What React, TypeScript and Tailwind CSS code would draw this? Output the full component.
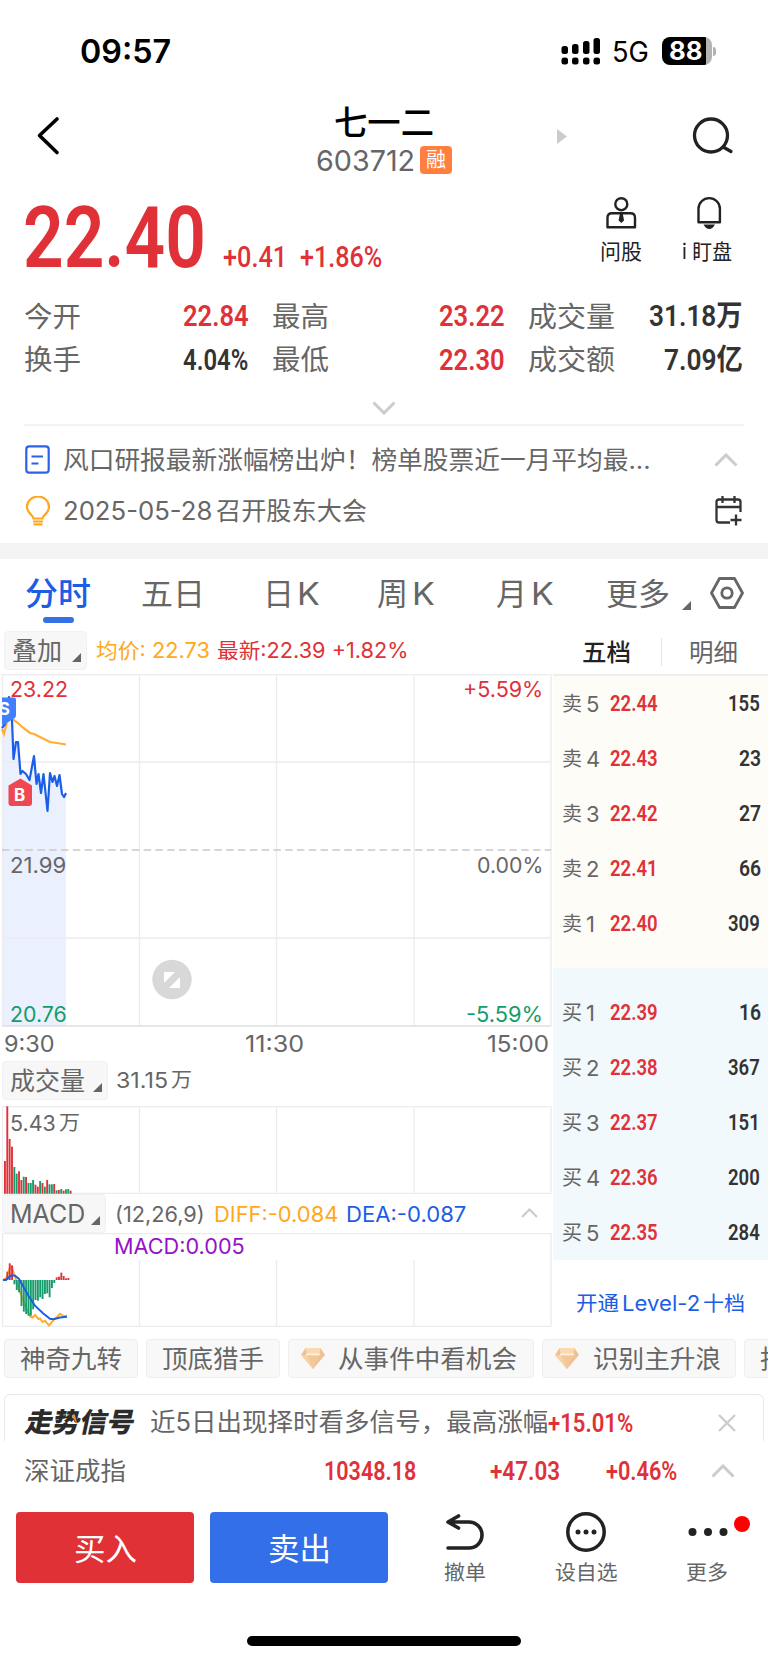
import { useLayoutEffect, useRef, type ReactNode } from "react";

const din = "font-['Roboto','Noto_Sans_CJK_SC',sans-serif]";

/* Single line of text, condensed or widened to fill the width of its box. */
function Fit({ className = "", children }: { className?: string; children: ReactNode }) {
  const box = useRef<HTMLSpanElement>(null);
  const text = useRef<HTMLSpanElement>(null);
  useLayoutEffect(() => {
    if (!box.current || !text.current) return;
    const ratio = box.current.clientWidth / text.current.offsetWidth;
    text.current.style.transform = `scaleX(${ratio})`;
  }, []);
  return (
    <span ref={box} className={`block shrink-0 leading-none ${className}`}>
      <span ref={text} className="inline-block origin-left whitespace-nowrap">
        {children}
      </span>
    </span>
  );
}

function Chevron({ up = false, className = "" }: { up?: boolean; className?: string }) {
  return (
    <svg className={`shrink-0 ${className}`} viewBox="0 0 24 14" fill="none" stroke="#cccccc" strokeWidth="3">
      <path d={up ? "M1.5 12.5 12 2l10.5 10.5" : "M1.5 1.5 12 12 22.5 1.5"} />
    </svg>
  );
}

function Corner({ className = "" }: { className?: string }) {
  return (
    <svg className={`size-[9px] shrink-0 ${className}`} viewBox="0 0 9 9">
      <path d="M9 0v9H0z" fill="#666" />
    </svg>
  );
}

function StatusBar() {
  return (
    <div className="flex h-[102px] items-center text-black">
      <Fit className="ml-[80px] w-[91px] pt-[1px] text-[33px] font-semibold">09:57</Fit>
      <svg className="ml-[390px] h-[28px] w-[40px] shrink-0" viewBox="561 37 40 28">
        <rect x="561.5" y="46" width="6.5" height="8" rx="2.5" />
        <rect x="572" y="44" width="6.5" height="10" rx="2.5" />
        <rect x="583" y="41" width="6.5" height="13" rx="2.5" />
        <rect x="593.500" y="38" width="6.5" height="16" rx="2.5" />
        <rect x="561.5" y="57.500" width="6.5" height="7" rx="2.5" />
        <rect x="572" y="57.500" width="6.5" height="7" rx="2.5" />
        <rect x="583" y="57.500" width="6.5" height="7" rx="2.5" />
        <rect x="593.500" y="57.500" width="6.5" height="7" rx="2.5" />
      </svg>
      <Fit className="ml-[11px] w-[37px] pt-[2px] text-[28px]">5G</Fit>
      <div className="ml-[13px] flex h-[28px] w-[50px] shrink-0 items-center justify-center overflow-hidden rounded-[8px] bg-[linear-gradient(90deg,#000_88%,#b3b3b3_88%)] pr-[2px] text-[25px] leading-none font-bold text-white">
        <Fit className="w-[34px]">88</Fit>
      </div>
      <div className="ml-[1px] h-[9px] w-[3px] shrink-0 rounded-r-full bg-[#b3b3b3]" />
    </div>
  );
}

function Header() {
  return (
    <div className="flex h-[88px] items-start">
      <svg className="mt-[14px] ml-[36px] h-[40px] w-[24px] shrink-0" viewBox="36 116 24 40" fill="none" stroke="#000" strokeWidth="3.6" strokeLinecap="round" strokeLinejoin="round">
        <path d="M57 119 39.500 135.500 57 152.500" />
      </svg>
      <div className="ml-[256px] w-[137px] shrink-0">
        <Fit className="ml-[18px] h-[44px] w-[100px] pt-[4px] text-[34px] font-medium text-black">七一二</Fit>
        <div className="flex items-start">
          <Fit className="w-[99px] text-[29px] text-[#666]">603712</Fit>
          <div className="ml-[5px] flex h-[28px] w-[32px] shrink-0 items-center justify-center rounded-[4px] bg-[#ff7f40] text-[20px] leading-none text-white">
            融
          </div>
        </div>
      </div>
      <svg className="mt-[27px] ml-[104px] h-[15px] w-[10px] shrink-0" viewBox="0 0 10 15">
        <path d="M0 0 10 7.500 0 15z" fill="#ccc" />
      </svg>
      <svg className="mt-[13px] ml-[125px] h-[40px] w-[42px] shrink-0" viewBox="692 115 42 40" fill="none" stroke="#222" strokeWidth="3.300" strokeLinecap="round">
        <circle cx="711" cy="135.500" r="16.500" />
        <path d="M724 147.500 731 151.500" />
      </svg>
    </div>
  );
}

function Quote() {
  return (
    <div className="flex h-[96px] items-start text-[#e03138]">
      <Fit className={`${din} mt-[5px] ml-[23px] h-[86px] w-[183px] text-[86px] font-semibold`}>22.40</Fit>
      <Fit className={`${din} mt-[52px] ml-[17px] w-[64px] text-[30px] font-medium`}>+0.41</Fit>
      <Fit className={`${din} mt-[52px] ml-[13px] w-[82px] text-[30px] font-medium`}>+1.86%</Fit>
      <div className="mt-[6px] ml-[217px] flex w-[44px] shrink-0 flex-col items-center text-[#222]">
        <svg className="h-[33px] w-[34px]" viewBox="605 196 34 33" fill="none" stroke="#222" strokeWidth="2.400">
          <circle cx="622.300" cy="204.200" r="6" />
          <path d="M608.500 227.300v-9.500q0-4.500 4.500-4.500h18.500q4.500 0 4.500 4.500v9.500z" strokeLinejoin="round" />
          <path d="M620.800 214h3l1.200 6.500-2.700 2.500-2.700-2.500z" fill="#222" stroke="none" />
        </svg>
        <Fit className="mt-[12px] w-[42px] text-[21px]">问股</Fit>
      </div>
      <div className="mt-[6px] ml-[37px] flex w-[54px] shrink-0 flex-col items-center text-[#222]">
        <svg className="ml-[3px] h-[33px] w-[30px]" viewBox="695 196 30 33" fill="none" stroke="#222" strokeWidth="2.400">
          <path d="M699.500 222.300v-13.500a10.700 10.700 0 0 1 21.400 0v13.500z" strokeLinejoin="round" />
          <path d="M704.500 224.500h11.500q-2.500 4.500-5.700 4.500t-5.800-4.500z" fill="#222" stroke="none" />
        </svg>
        <Fit className="mt-[12px] w-[50px] text-[21px]">i 盯盘</Fit>
      </div>
    </div>
  );
}

function Stats() {
  const label = "text-[28px] text-[#666]";
  const value = `${din} text-[29px] font-semibold`;
  return (
    <div className="flex flex-col pt-[9px]">
      <div className="flex h-[43px] items-center">
        <Fit className={`ml-[24px] w-[57px] ${label}`}>今开</Fit>
        <Fit className={`ml-[102px] w-[66px] text-[#e03138] ${value}`}>22.84</Fit>
        <Fit className={`ml-[23px] w-[57px] ${label}`}>最高</Fit>
        <Fit className={`ml-[110px] w-[66px] text-[#e03138] ${value}`}>23.22</Fit>
        <Fit className={`ml-[23px] w-[87px] ${label}`}>成交量</Fit>
        <Fit className={`ml-[34px] w-[94px] text-[#333] ${value}`}>31.18万</Fit>
      </div>
      <div className="flex h-[43px] items-center pt-[1px]">
        <Fit className={`ml-[24px] w-[57px] ${label}`}>换手</Fit>
        <Fit className={`ml-[102px] w-[65px] text-[#333] ${value}`}>4.04%</Fit>
        <Fit className={`ml-[24px] w-[57px] ${label}`}>最低</Fit>
        <Fit className={`ml-[110px] w-[66px] text-[#e03138] ${value}`}>22.30</Fit>
        <Fit className={`ml-[23px] w-[87px] ${label}`}>成交额</Fit>
        <Fit className={`ml-[49px] w-[79px] text-[#333] ${value}`}>7.09亿</Fit>
      </div>
      <div className="mx-[24px] flex h-[45px] justify-center border-b-2 border-[#f3f3f3] pt-[20px]">
        <Chevron className="h-[14px] w-[24px]" />
      </div>
    </div>
  );
}

function News() {
  return (
    <div className="h-[133px] border-b-[16px] border-[#f4f4f4] pt-[8px] text-[25px] text-[#666]">
      <div className="flex h-[51px] items-center">
        <svg className="ml-[25px] h-[29px] w-[25px] shrink-0" viewBox="0 0 25 29" fill="none" stroke="#2a63ea" strokeWidth="2.200">
          <rect x="1.300" y="1.300" width="22.400" height="26.400" rx="3" />
          <path d="M6.500 11.500h11.500M6.500 18.500h7" />
        </svg>
        <Fit className="ml-[13px] w-[588px] pt-[1px]">风口研报最新涨幅榜出炉！榜单股票近一月平均最...</Fit>
        <Chevron up className="ml-[63px] h-[14px] w-[24px]" />
      </div>
      <div className="flex h-[51px] items-center">
        <svg className="ml-[25px] h-[30px] w-[26px] shrink-0" viewBox="0 0 26 30" fill="none" stroke="#ffa81d" strokeWidth="2.200">
          <path d="M8.500 22.500c0-3.500-6.500-5-6.500-11.500a11 10.500 0 0 1 22 0c0 6.500-6.500 8-6.500 11.500zM8 25.500h10M8.500 28.300h9" />
        </svg>
        <Fit className="ml-[12px] w-[149px] pt-[1px]">2025-05-28</Fit>
        <Fit className="ml-[4px] w-[151px] pt-[1px]">召开股东大会</Fit>
        <svg className="ml-[347px] h-[30px] w-[30px] shrink-0" viewBox="0 0 30 30" fill="none" stroke="#333" strokeWidth="2.300">
          <path d="M16 26.500H5q-2.500 0-2.500-2.500V6Q2.500 3.500 5 3.500h19q2.500 0 2.500 2.500v10M2.500 11h24M8.500 0v7M20.500 0v7M22 18.500v11M16.500 24h11" />
        </svg>
      </div>
    </div>
  );
}

function Tabs() {
  const tab = "text-[31px] text-[#666]";
  return (
    <div className="flex h-[71px] items-start">
      <div className="mt-[19px] ml-[25px] w-[66px] shrink-0">
        <Fit className="w-[66px] text-[32px] font-medium text-[#1d5de6]">分时</Fit>
        <div className="mt-[7px] ml-[18px] h-[6px] w-[31px] rounded-full bg-[#3470e8]" />
      </div>
      <Fit className={`mt-[19px] ml-[50px] w-[64px] ${tab}`}>五日</Fit>
      <div className="mt-[19px] ml-[58px] flex w-[58px] shrink-0 gap-[3px]">
        <Fit className={`w-[31px] ${tab}`}>日</Fit>
        <Fit className={`w-[23px] ${tab}`}>K</Fit>
      </div>
      <div className="mt-[19px] ml-[56px] flex w-[60px] shrink-0 gap-[4px]">
        <Fit className={`w-[31px] ${tab}`}>周</Fit>
        <Fit className={`w-[23px] ${tab}`}>K</Fit>
      </div>
      <div className="mt-[19px] ml-[59px] flex w-[60px] shrink-0 gap-[4px]">
        <Fit className={`w-[31px] ${tab}`}>月</Fit>
        <Fit className={`w-[23px] ${tab}`}>K</Fit>
      </div>
      <Fit className={`mt-[19px] ml-[50px] w-[64px] ${tab}`}>更多</Fit>
      <Corner className="mt-[42px] ml-[12px]" />
      <svg className="mt-[18px] ml-[19px] h-[32px] w-[34px] shrink-0" viewBox="0 0 34 32" fill="none" stroke="#666" strokeWidth="2.800" strokeLinejoin="round">
        <path d="M9.500 1.500h15l8 14.500-8 14.500h-15l-8-14.500z" />
        <circle cx="17" cy="16" r="5.200" />
      </svg>
    </div>
  );
}

const pricePath =
  "M2 728 5 724 7 712 9 697 11 708 12 720 13.500 759 16 742 18 742 20.500 774 22.500 771 26 774 29.500 780 34 756 36.500 784 38.500 774 41 793 43.500 774 47.500 811 50 773 52.500 782 54.500 776 57 786 59.500 775 62 794 64 797 66 793";

function PriceChart() {
  return (
    <div className="relative h-[353px] text-[21px]">
      <svg className="block h-[353px] w-[552px]" viewBox="0 674 552 353" fill="none">
        <path d={`${pricePath}V1026H2z`} fill="#eaf0fe" />
        <g stroke="#ececef" strokeWidth="1.300">
          <path d="M2 674.500H551M2 762H551M2 938H551M2.500 674V1026M139.500 674V1026M276.500 674V1026M414 674V1026M551 674V1026" />
          <path d="M2 1026H551" stroke="#dfdfdf" strokeWidth="1.600" />
        </g>
        <path d="M2 850H551" stroke="#c9c9c9" strokeWidth="1.700" strokeDasharray="7.500 4.300" />
        <path d="M2 729 4 734 8 718 12 718 15 721 18 723 22 727 30 733 34 734 40 737 50 742 60 743.500 66 744.500" stroke="#ffae33" strokeWidth="2.200" />
        <path d={pricePath} stroke="#1b5ee8" strokeWidth="2.200" strokeLinejoin="round" />
        <path d="M2 697.500h12q2 0 2 2v16q0 2-2 3l-9 5.500-3 1z" fill="#4080ff" />
        <path d="M20.500 778.500 32 785.500V803q0 3-3 3H11.500q-3 0-3-3V785.500z" fill="#ee4850" />
        <circle cx="172" cy="979.500" r="19.700" fill="#d8d8d8" />
        <path d="M164 972h11l-11 11zM180 988h-11l11-11z" fill="#fff" />
      </svg>
      <span className="absolute top-[27px] left-[2px] flex h-[16px] w-[8px] justify-end overflow-hidden text-[17px] leading-[16px] font-bold text-white">S</span>
      <span className="absolute top-[112px] left-[14px] text-[17px] leading-[18px] font-bold text-white">B</span>
      <Fit className="absolute top-[5px] left-[10px] w-[58px] text-[#e03138]">23.22</Fit>
      <Fit className="absolute top-[5px] left-[463px] w-[80px] text-[#e03138]">+5.59%</Fit>
      <Fit className="absolute top-[181px] left-[10px] w-[56px] text-[#666]">21.99</Fit>
      <Fit className="absolute top-[181px] left-[477px] w-[66px] text-[#666]">0.00%</Fit>
      <Fit className="absolute top-[330px] left-[10px] w-[57px] text-[#169c6b]">20.76</Fit>
      <Fit className="absolute top-[330px] left-[466px] w-[77px] text-[#169c6b]">-5.59%</Fit>
    </div>
  );
}

/* Traded volume per minute as [bar top, direction], in thirds of a pixel. */
const volume: [number, string][] = [
  [213, "r"], [49, "r"], [147, "r"], [170, "r"], [231, "g"], [251, "g"], [244, "r"], [270, "r"], [260, "g"], [261, "r"],
  [279, "g"], [279, "g"], [270, "g"], [284, "r"], [290, "r"], [273, "g"], [279, "r"], [290, "g"], [270, "r"], [283, "g"],
  [283, "g"], [282, "r"], [301, "g"], [300, "r"], [297, "g"], [302, "r"], [298, "g"], [297, "g"], [302, "r"],
];
const macd = [
  566, 545, 520, 526, 583, 600, 607, 648, 665, 672, 677, 677, 658, 630, 632, 622, 627, 612, 610, 622, 594, 579, 562, 560,
  548, 558, 565, 564,
];

function VolumeChart() {
  return (
    <div className="relative h-[88px]">
      <svg className="block h-[88px] w-[552px]" viewBox="0 1106 552 88" fill="none">
        <path d="M2 1106.500H551M2 1193.500H551M2.500 1106V1194M139.500 1106V1194M276.500 1106V1194M414 1106V1194M551 1106V1194" stroke="#ececef" strokeWidth="1.300" />
        {volume.map(([top, c], i) => (
          <rect key={i} x={4 + i * 2.345} y={1090 + top / 3} width="1.900" height={103.700 - top / 3} fill={c === "r" ? "#e03138" : "#169c6b"} />
        ))}
      </svg>
      <Fit className="absolute top-[7px] left-[10px] w-[46px] text-[21px] text-[#666]">5.43</Fit>
      <Fit className="absolute top-[7px] left-[59px] w-[21px] text-[20px] text-[#666]">万</Fit>
    </div>
  );
}

function MacdChart() {
  return (
    <div className="relative h-[94px]">
      <svg className="block h-[94px] w-[552px]" viewBox="0 1233 552 94" fill="none">
        <path d="M2 1233.500H551M2 1326.300H551M2.500 1233V1326M139.500 1260V1326M276.500 1260V1326M414 1260V1326M551 1233V1326" stroke="#ececef" strokeWidth="1.300" />
        <path d="M3 1280 6 1278.500 9.500 1268.500 12 1267 15 1277 20 1292 25 1305 30 1316.500 32.500 1317.500 35 1315 38.500 1319 40 1318.500 42.500 1322 45 1320.800 49 1325.500 53.500 1320 57 1317 60 1313.800 63.500 1316 67 1315.700" stroke="#ffae33" strokeWidth="2" />
        {macd.map((v, i) => (
          <rect
            key={i}
            x={4.100 + i * 2.345}
            y={v < 570 ? 1090 + v / 3 : 1280}
            width="1.900"
            height={Math.abs(v - 570) / 3}
            fill={v < 570 ? "#e03138" : "#169c6b"}
          />
        ))}
        <path d="M3 1280H6L9 1277 12 1275.300 15 1275.700 19 1279 23.500 1287 28.500 1296 35 1305.700 43 1313.300 50 1318.700 53.500 1319.300 60 1317.500 67 1316.700" stroke="#1b5ee8" strokeWidth="2" />
      </svg>
      <Fit className="absolute top-[3px] left-[114px] w-[131px] text-[21px] text-[#9412c8]">MACD:0.005</Fit>
    </div>
  );
}

function Picker({ className, children }: { className: string; children: ReactNode }) {
  return (
    <div className={`flex h-[39px] shrink-0 items-center rounded-[4px] border border-[#f1f1f1] bg-[#f7f7f7] text-[25px] text-[#666] ${className}`}>
      {children}
      <Corner className="mt-[14px] mr-[5px] ml-auto" />
    </div>
  );
}

function Charts() {
  return (
    <div className="w-[552px]">
      <div className="flex h-[44px] items-start pt-[1px] text-[21px]">
        <Picker className="ml-[4px] w-[83px]">
          <Fit className="ml-[7px] w-[50px] pt-[1px]">叠加</Fit>
        </Picker>
        <Fit className="mt-[9px] ml-[9px] w-[114px] text-[#ffa81d]">均价: 22.73</Fit>
        <Fit className="mt-[9px] ml-[7px] w-[191px] text-[#e03138]">最新:22.39 +1.82%</Fit>
      </div>
      <PriceChart />
      <div className="flex h-[34px] items-center text-[23px] text-[#666]">
        <Fit className="ml-[4px] w-[51px]">9:30</Fit>
        <Fit className="ml-[190px] w-[59px]">11:30</Fit>
        <Fit className="ml-[183px] w-[62px]">15:00</Fit>
      </div>
      <div className="flex h-[45px] items-start text-[21px] text-[#666]">
        <Picker className="ml-[2px] w-[106px]">
          <Fit className="ml-[7px] w-[75px] pt-[1px]">成交量</Fit>
        </Picker>
        <Fit className="mt-[9px] ml-[8px] w-[52px]">31.15</Fit>
        <Fit className="mt-[9px] ml-[3px] w-[21px] text-[20px]">万</Fit>
      </div>
      <VolumeChart />
      <div className="flex h-[39px] items-start text-[21px]">
        <Picker className="ml-[2px] w-[104px]">
          <Fit className="ml-[7px] w-[75px] pt-[1px] text-[25px]">MACD</Fit>
        </Picker>
        <Fit className="mt-[10px] ml-[9px] w-[90px] text-[#666]">(12,26,9)</Fit>
        <Fit className="mt-[10px] ml-[9px] w-[124px] text-[#ffa81d]">DIFF:-0.084</Fit>
        <Fit className="mt-[10px] ml-[8px] w-[120px] text-[#1d5de6]">DEA:-0.087</Fit>
        <Chevron up className="mt-[14px] ml-[55px] h-[10px] w-[17px]" />
      </div>
      <MacdChart />
    </div>
  );
}

function Level({ side, n, price, qty, qtyWidth }: { side: string; n: number; price: string; qty: string; qtyWidth: string }) {
  return (
    <div className="flex h-[55.1px] items-center text-[20px] text-[#666]">
      <Fit className="ml-[9px] w-[20px] pt-[1px]">{side}</Fit>
      <span className="ml-[4px] w-[16px] shrink-0 text-[22px] leading-none">{n}</span>
      <Fit className={`ml-[8px] w-[48px] pt-[1px] text-[22px] font-semibold text-[#e03138] ${din}`}>{price}</Fit>
      <Fit className={`mr-[8px] ml-auto pt-[1px] text-[22px] font-semibold text-[#333] ${din} ${qtyWidth}`}>{qty}</Fit>
    </div>
  );
}

const sells: [number, string, string][] = [
  [5, "22.44", "155"], [4, "22.43", "23"], [3, "22.42", "27"], [2, "22.41", "66"], [1, "22.40", "309"],
];
const buys: [number, string, string][] = [
  [1, "22.39", "16"], [2, "22.38", "367"], [3, "22.37", "151"], [4, "22.36", "200"], [5, "22.35", "284"],
];

function OrderBook() {
  return (
    <div className="ml-[1px] flex w-[215px] flex-col">
      <div className="flex h-[46px] items-center border-b-2 border-[#eeeeee] text-[24px]">
        <Fit className="ml-[29px] w-[49px] pt-[1px] font-medium text-[#222]">五档</Fit>
        <div className="ml-[30px] h-[28px] w-px bg-[#e6e6e6]" />
        <Fit className="ml-[27px] w-[49px] pt-[1px] text-[#666]">明细</Fit>
      </div>
      <div className="h-[292px] bg-[#fefcf7]">
        {sells.map(([n, p, q]) => (
          <Level key={n} side="卖" n={n} price={p} qty={q} qtyWidth={q.length > 2 ? "w-[32px]" : "w-[21.500px]"} />
        ))}
      </div>
      <div className="h-[292px] bg-[#f2f9fc] pt-[17px]">
        {buys.map(([n, p, q]) => (
          <Level key={n} side="买" n={n} price={p} qty={q} qtyWidth={q.length > 2 ? "w-[32px]" : "w-[21.500px]"} />
        ))}
      </div>
      <div className="flex flex-1 items-center pt-[20px] text-[20px] text-[#1d5de6]">
        <Fit className="ml-[23px] w-[43px]">开通</Fit>
        <Fit className="ml-[3px] w-[78px] text-[21px]">Level-2</Fit>
        <Fit className="ml-[3px] w-[42px]">十档</Fit>
      </div>
    </div>
  );
}

function Gem() {
  return (
    <svg className="h-[21px] w-[24px] shrink-0" viewBox="0 0 24 21">
      <path d="M4.500 0h15L24 7 12 21 0 7z" fill="#efc193" />
      <path d="M4.500 0h15l-1.500 7H6z" fill="#fbd9b2" />
      <path d="M6 7h12l-6 14z" fill="#f3c898" />
      <path d="M0 7h6l6 14z" fill="#f8d3a8" />
      <path d="M5 6.500h14" stroke="#fff0dd" strokeWidth="1.600" />
    </svg>
  );
}

function Chips() {
  const chip = "flex h-[39px] shrink-0 items-center rounded-[4px] border border-[#eeeeee] bg-[#f8f8f8]";
  return (
    <div className="flex h-[67px] gap-[8px] overflow-hidden pt-[12px] pl-[4px] text-[25px] text-[#666]">
      <div className={`${chip} w-[134px] pl-[15px]`}><Fit className="w-[102px] pt-[1px]">神奇九转</Fit></div>
      <div className={`${chip} w-[134px] pl-[15px]`}><Fit className="w-[102px] pt-[1px]">顶底猎手</Fit></div>
      <div className={`${chip} w-[246px] pl-[12px]`}><Gem /><Fit className="ml-[13px] w-[179px] pt-[1px]">从事件中看机会</Fit></div>
      <div className={`${chip} w-[194px] pl-[12px]`}><Gem /><Fit className="ml-[14px] w-[128px] pt-[1px]">识别主升浪</Fit></div>
      <div className={`${chip} w-[134px] pl-[15px]`}><Fit className="w-[102px] pt-[1px]">指标解读</Fit></div>
    </div>
  );
}

function Signal() {
  return (
    <div className="mx-[4px] flex h-[47px] items-center rounded-t-[6px] border border-b-0 border-[#e9e9e9] pt-[9px] text-[25px] text-[#666]">
      <div className="relative ml-[21px] shrink-0 -skew-x-12">
        <Fit className="w-[109px] text-[27px] font-black text-[#2b2b2b]">走势信号</Fit>
        <svg className="absolute top-[6px] left-[44px] h-[10px] w-[8px]" viewBox="0 0 8 10">
          <path d="M0 0h3.500L8 10z" fill="#f58a1f" />
        </svg>
      </div>
      <Fit className="ml-[15px] w-[398px]">近5日出现择时看多信号，最高涨幅</Fit>
      <Fit className={`w-[85px] text-[26px] font-semibold text-[#e03138] ${din}`}>+15.01%</Fit>
      <svg className="ml-[85px] h-[18px] w-[18px] shrink-0" viewBox="0 0 18 18" stroke="#ccc" strokeWidth="2.300">
        <path d="M1 1 17 17M17 1 1 17" />
      </svg>
    </div>
  );
}

function IndexRow() {
  const num = `${din} text-[26px] font-semibold text-[#e03138]`;
  return (
    <div className="flex h-[60px] items-center">
      <Fit className="ml-[24px] w-[102px] text-[25px] text-[#666]">深证成指</Fit>
      <Fit className={`ml-[198px] w-[92px] ${num}`}>10348.18</Fit>
      <Fit className={`ml-[74px] w-[70px] ${num}`}>+47.03</Fit>
      <Fit className={`ml-[46px] w-[71px] ${num}`}>+0.46%</Fit>
      <Chevron up className="ml-[34px] h-[14px] w-[24px]" />
    </div>
  );
}

function ActionBar() {
  return (
    <div className="flex h-[135px] items-start pt-[11px] text-[20.5px] text-[#666]">
      <button className="ml-[16px] flex h-[71px] w-[178px] shrink-0 items-center rounded-[4px] bg-[#e03137] pt-[2px] text-[31px] text-white">
        <Fit className="ml-[57px] w-[63px]">买入</Fit>
      </button>
      <button className="ml-[16px] flex h-[71px] w-[178px] shrink-0 items-center rounded-[4px] bg-[#336fe8] pt-[2px] text-[31px] text-white">
        <Fit className="ml-[57px] w-[63px]">卖出</Fit>
      </button>
      <div className="ml-[55px] flex w-[44px] shrink-0 flex-col items-center">
        <svg className="h-[42px] w-[42px]" viewBox="445 1512 42 42" fill="none" stroke="#222" strokeWidth="3.600" strokeLinecap="round" strokeLinejoin="round">
          <path d="M459.500 1516 449 1522 459.500 1528M450 1522h20a13 13 0 0 1 0 26H449" />
        </svg>
        <Fit className="mt-[9px] w-[42px]">撤单</Fit>
      </div>
      <div className="ml-[67px] flex w-[64px] shrink-0 flex-col items-center">
        <svg className="h-[42px] w-[42px]" viewBox="0 0 42 42" fill="#222">
          <circle cx="21" cy="20" r="18.200" fill="none" stroke="#222" strokeWidth="3.500" />
          <circle cx="13" cy="20" r="2.500" />
          <circle cx="21" cy="20" r="2.500" />
          <circle cx="29" cy="20" r="2.500" />
        </svg>
        <Fit className="mt-[9px] w-[63px]">设自选</Fit>
      </div>
      <div className="ml-[68px] flex w-[46px] shrink-0 flex-col">
        <svg className="h-[42px] w-[64px]" viewBox="685 1512 64 42" fill="#222">
          <circle cx="691.500" cy="1532" r="4" />
          <circle cx="707" cy="1532" r="4" />
          <circle cx="722.500" cy="1532" r="4" />
          <circle cx="741" cy="1524" r="8" fill="#ff0000" />
        </svg>
        <Fit className="mt-[9px] w-[42px]">更多</Fit>
      </div>
    </div>
  );
}

export default function App() {
  return (
    <div className="h-[1663px] w-[768px] overflow-hidden bg-white font-['Inter','Noto_Sans_CJK_SC',sans-serif]">
      <StatusBar />
      <Header />
      <Quote />
      <Stats />
      <News />
      <Tabs />
      <div className="flex">
        <Charts />
        <OrderBook />
      </div>
      <Chips />
      <Signal />
      <IndexRow />
      <ActionBar />
      <div className="mx-auto h-[10px] w-[274px] rounded-full bg-black" />
    </div>
  );
}
